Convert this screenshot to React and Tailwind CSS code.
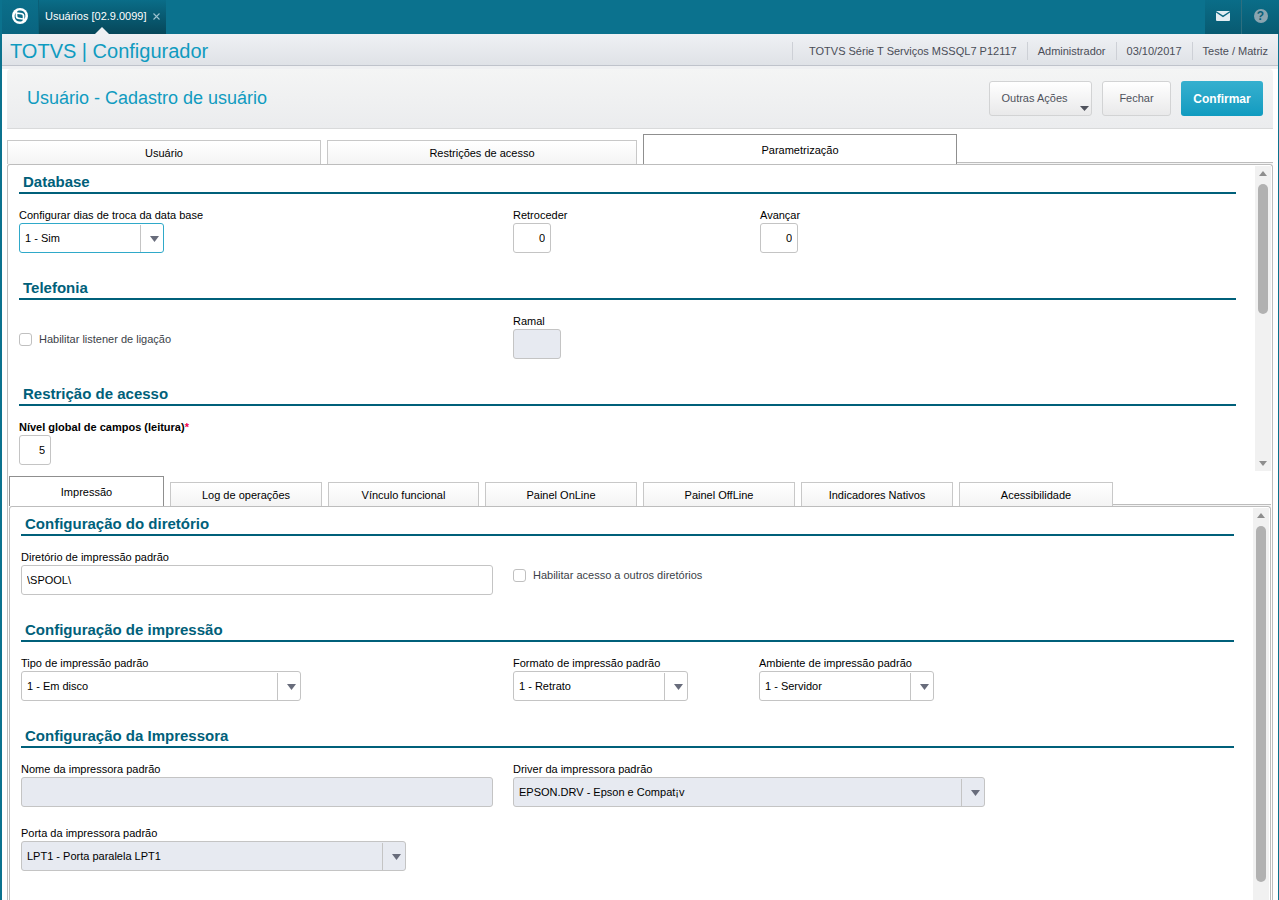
import { useState } from "react";

function Arrow({ up, className }) {
  return (
    <svg viewBox="0 0 9 6" preserveAspectRatio="none" className={className} aria-hidden="true">
      <path d={up ? "M0 6h9L4.5 0z" : "M0 0h9L4.5 6z"} fill="currentColor" />
    </svg>
  );
}

function TopBar() {
  return (
    <header className="flex h-[34px] justify-between bg-[#0b728e] pl-0.5">
      <div className="flex">
        <button type="button" aria-label="Início" className="flex w-[37px] items-center justify-center border-r border-[#0a5f77] bg-linear-to-b from-[#0b6f8a] to-[#096480]">
          <svg viewBox="0 0 16 16" className="mb-0.5 size-4" aria-hidden="true">
            <circle cx="8" cy="8" r="8" fill="#fff" />
            <path d="M6.800 2.600Q12.200 1.900 13.300 6.600Q13.700 9.200 12.400 11.200V7.600Q12.400 5.400 10.200 4.900L4.800 4.200Q5.600 2.900 6.800 2.600z" fill="#0b6a85" />
            <path d="M9.200 13.400Q3.800 14.100 2.700 9.400Q2.300 6.800 3.600 4.800V8.400Q3.600 10.600 5.800 11.100L11.200 11.800Q10.400 13.100 9.200 13.400z" fill="#0b6a85" />
            <path d="M5.400 5.900L9.400 6.500Q10.700 6.800 10.700 8V10.200L6.700 9.600Q5.400 9.300 5.400 8z" fill="#0b6a85" />
          </svg>
        </button>
        <div className="relative flex w-[127px] items-center bg-linear-to-b from-[#0a6d88] to-[#06475a] pl-1.5 text-[11px] text-white">
          <span className="whitespace-nowrap pb-0.5">Usuários [02.9.0099]</span>
          <button type="button" aria-label="Fechar aba" className="ml-1.5 pb-0.5">
            <svg viewBox="0 0 7 7" className="size-[7px]" aria-hidden="true">
              <path d="M.5.5l6 6M6.500.5l-6 6" stroke="#9cc3cf" strokeWidth="1.100" />
            </svg>
          </button>
          <svg viewBox="0 0 14 7" className="absolute bottom-0 left-14 h-[7px] w-3.5" aria-hidden="true">
            <path d="M0 7L7 0l7 7z" fill="#eef0f3" />
          </svg>
        </div>
      </div>
      <div className="flex">
        <button type="button" aria-label="Mensagens" className="flex w-[37px] items-center justify-center border-r border-[#2d6f80] bg-linear-to-b from-[#0a6d88] to-[#085a71]">
          <svg viewBox="0 0 14 10" className="mb-0.5 h-2.5 w-3.5" aria-hidden="true">
            <rect width="14" height="10" rx="1" fill="#e3edf2" />
            <path d="M0 .8l7 4.600 7-4.600" fill="none" stroke="#0a6680" strokeWidth="1.300" />
          </svg>
        </button>
        <button type="button" aria-label="Ajuda" className="flex w-[37px] items-center justify-center bg-linear-to-b from-[#0a6d88] to-[#085a71]">
          <span className="mb-0.5 flex size-3.5 items-center justify-center rounded-full bg-[#8aa5b1] text-[12px] font-bold text-[#0a5f77]">?</span>
        </button>
      </div>
    </header>
  );
}

function AppHeader() {
  const info = ["TOTVS Série T Serviços MSSQL7 P12117", "Administrador", "03/10/2017", "Teste / Matriz"];
  return (
    <div className="bg-[#eff0f2] pb-[3px]">
      <div className="flex h-8 items-center justify-between border-b border-[#bfc3cb] bg-linear-to-b from-[#eff1f4] to-[#dfe2e7] pl-2 pt-0.5">
        <p className="whitespace-nowrap text-[20px] text-[#0f9bc0]">TOTVS | Configurador</p>
        <ul className="flex text-[11px] text-[#4a4d57]">
          {info.map((text) => (
            <li key={text} className="flex h-[18px] items-center whitespace-nowrap border-l border-[#cdd0d6] px-[10px] pt-px first:pl-4">
              {text}
            </li>
          ))}
        </ul>
      </div>
    </div>
  );
}

function TitleBar() {
  return (
    <div className="mx-[5px] flex h-[60px] items-center justify-between rounded-t border-b border-[#d9dadb] bg-linear-to-b from-[#f4f5f5] to-[#ebecee] pl-5 pr-[10px]">
      <h1 className="text-[18px] text-[#0f9bc0]">Usuário - Cadastro de usuário</h1>
      <div className="flex gap-[10px] text-[11px] text-[#4f525c]">
        <button type="button" className="relative h-[35px] w-[103px] rounded-[3px] border border-[#d2d3d4] bg-linear-to-b from-white to-[#e9e9ea] pr-3">
          Outras Ações
          <Arrow className="absolute bottom-1 right-[2px] h-[5px] w-[9px] text-[#4f525c]" />
        </button>
        <button type="button" className="h-[35px] w-[69px] rounded-[3px] border border-[#d2d3d4] bg-linear-to-b from-white to-[#e9e9ea]">
          Fechar
        </button>
        <button type="button" className="h-[35px] w-[82px] rounded-[3px] bg-linear-to-b from-[#35b0cf] to-[#0f9bc0] text-[12px] font-bold text-white">
          Confirmar
        </button>
      </div>
    </div>
  );
}

function Tabs({ items, active, onSelect }) {
  return (
    <div role="tablist" className="flex items-end">
      {items.map(({ name, width }, i) => (
        <div key={name} className={i < items.length - 1 ? "flex pr-1.5" : "flex"}>
          <button
            type="button"
            role="tab"
            aria-selected={i === active}
            onClick={() => onSelect(i)}
            className={
              (i === active
                ? "h-[30px] border-[#8f8f8f] bg-white "
                : "h-6 border-[#c8c8c8] bg-linear-to-b from-white to-[#f4f4f4] ") +
              "border border-b-0 pt-0.5 text-[11px] " + width
            }
          >
            {name}
          </button>
        </div>
      ))}
      <div className="h-[2px] flex-1 border-t border-[#bdbdbd] bg-[#f4f4f4]" />
    </div>
  );
}

function ScrollTrack({ thumb, end }) {
  return (
    <div className="flex w-4 shrink-0 flex-col items-center bg-[#f1f1f1] py-[5px]">
      <Arrow up className="mb-2 h-[5px] w-2 text-[#8e8e8e]" />
      <div className={"w-[10px] rounded-full bg-[#b1b1b1] " + thumb} />
      {end && <Arrow className="mt-auto h-[5px] w-2 text-[#8e8e8e]" />}
    </div>
  );
}

function Section({ title, last, children }) {
  return (
    <section className={last ? "pb-1.5" : "pb-[23px]"}>
      <h2 className="mb-[15px] h-6 border-b-2 border-[#00607a] pl-1 text-[15px] leading-6 font-bold text-[#00607a]">{title}</h2>
      {children}
    </section>
  );
}

function Field({ id, label, required, className = "", children }) {
  return (
    <div className={"min-w-0 " + className}>
      <label htmlFor={id} className={"block h-3.5 whitespace-nowrap text-[11px] leading-[13px] " + (required ? "font-bold" : "")}>
        {label}
        {required && <span className="text-[#f0004c]">*</span>}
      </label>
      {children}
    </div>
  );
}

function TextBox({ id, value, width, numeric, disabled }) {
  return (
    <input
      id={id}
      type="text"
      defaultValue={value}
      disabled={disabled}
      className={
        "block h-[30px] rounded-[3px] border border-[#c4c4c4] px-[5px] text-[11px] text-black " +
        (numeric ? "text-right " : "") +
        (disabled ? "bg-[#e7eaf1] " : "bg-white ") +
        width
      }
    />
  );
}

function Select({ id, value, width, focused, disabled }) {
  return (
    <div className={"relative h-[30px] max-w-full " + width}>
      <select
        id={id}
        disabled={disabled}
        className={
          "block size-full appearance-none rounded-[3px] border pl-[5px] pr-6 text-[11px] text-black opacity-100 " +
          (focused ? "border-[#2fa9c9] " : "border-[#c4c4c4] ") +
          (disabled ? "bg-[#e7eaf1]" : "bg-white")
        }
      >
        <option>{value}</option>
      </select>
      <span className="pointer-events-none absolute bottom-px right-px top-0.5 flex w-[23px] items-center justify-center border-l border-[#c4c4c4] pl-1">
        <Arrow className="h-1.5 w-[9px] text-[#686c7b]" />
      </span>
    </div>
  );
}

function CheckBox({ label, className }) {
  return (
    <label className={"flex items-center gap-[7px] self-start whitespace-nowrap text-[11px] leading-[13px] text-[#3c3f48] " + className}>
      <input type="checkbox" className="size-[13px] appearance-none rounded-[3px] border border-[#c0c0c0] bg-white checked:bg-[#0f9bc0]" />
      {label}
    </label>
  );
}

const mainTabs = [
  { name: "Usuário", width: "w-[314px]" },
  { name: "Restrições de acesso", width: "w-[310px]" },
  { name: "Parametrização", width: "w-[314px]" },
];

const subTabs = [
  { name: "Impressão", width: "w-[155px]" },
  { name: "Log de operações", width: "w-[152px]" },
  { name: "Vínculo funcional", width: "w-[151px]" },
  { name: "Painel OnLine", width: "w-[152px]" },
  { name: "Painel OffLine", width: "w-[152px]" },
  { name: "Indicadores Nativos", width: "w-[152px]" },
  { name: "Acessibilidade", width: "w-[154px]" },
];

function GeneralSettings() {
  const row = "grid grid-cols-[494fr_247fr_476fr]";
  return (
    <div className="flex pr-px pt-px">
      <div className="mr-[19px] min-w-0 flex-1 pl-[11px] pt-1">
        <Section title="Database">
          <div className={row}>
            <Field id="troca" label="Configurar dias de troca da data base">
              <Select id="troca" value="1 - Sim" width="w-[145px]" focused />
            </Field>
            <Field id="retroceder" label="Retroceder">
              <TextBox id="retroceder" value="0" width="w-[38px]" numeric />
            </Field>
            <Field id="avancar" label="Avançar">
              <TextBox id="avancar" value="0" width="w-[38px]" numeric />
            </Field>
          </div>
        </Section>
        <Section title="Telefonia">
          <div className={row}>
            <CheckBox label="Habilitar listener de ligação" className="pt-[18px]" />
            <Field id="ramal" label="Ramal">
              <TextBox id="ramal" value="" width="w-12" disabled />
            </Field>
          </div>
        </Section>
        <Section title="Restrição de acesso" last>
          <Field id="nivel" label="Nível global de campos (leitura)" required>
            <TextBox id="nivel" value="5" width="w-8" numeric />
          </Field>
        </Section>
      </div>
      <ScrollTrack thumb="h-[130px]" end />
    </div>
  );
}

function PrintSettings() {
  const row = "grid grid-cols-[492fr_246fr_475fr]";
  return (
    <div className="flex flex-1 rounded-t-[3px] border border-b-0 border-[#bdbdbd] pr-px pt-px">
      <div className="mr-[19px] min-w-0 flex-1 pl-[11px] pt-1">
        <Section title="Configuração do diretório">
          <div className={row}>
            <Field id="diretorio" label="Diretório de impressão padrão" className="pr-5">
              <TextBox id="diretorio" value="\SPOOL\" width="w-full" />
            </Field>
            <CheckBox label="Habilitar acesso a outros diretórios" className="pt-[18px]" />
          </div>
        </Section>
        <Section title="Configuração de impressão">
          <div className={row}>
            <Field id="tipo" label="Tipo de impressão padrão">
              <Select id="tipo" value="1 - Em disco" width="w-[280px]" />
            </Field>
            <Field id="formato" label="Formato de impressão padrão">
              <Select id="formato" value="1 - Retrato" width="w-[175px]" />
            </Field>
            <Field id="ambiente" label="Ambiente de impressão padrão">
              <Select id="ambiente" value="1 - Servidor" width="w-[175px]" />
            </Field>
          </div>
        </Section>
        <Section title="Configuração da Impressora">
          <div className={row + " gap-y-5"}>
            <Field id="nome" label="Nome da impressora padrão" className="pr-5">
              <TextBox id="nome" value="" width="w-full" disabled />
            </Field>
            <Field id="driver" label="Driver da impressora padrão" className="col-span-2">
              <Select id="driver" value="EPSON.DRV - Epson e Compat¡v" width="w-[472px]" disabled />
            </Field>
            <Field id="porta" label="Porta da impressora padrão">
              <Select id="porta" value="LPT1 - Porta paralela LPT1" width="w-[385px]" disabled />
            </Field>
          </div>
        </Section>
      </div>
      <ScrollTrack thumb="h-[356px]" />
    </div>
  );
}

export default function App() {
  const [tab, setTab] = useState(2);
  const [subTab, setSubTab] = useState(0);
  return (
    <div className="flex min-h-screen flex-col bg-white font-['Liberation_Sans',Arial,sans-serif] leading-normal text-black">
      <TopBar />
      <div className="flex flex-1 flex-col border-l-2 border-r border-[#0b728e]">
        <AppHeader />
        <TitleBar />
        <main className="flex flex-1 flex-col px-[5px] pt-[5px]">
          <Tabs items={mainTabs} active={tab} onSelect={setTab} />
          <div className="flex flex-1 flex-col rounded-t-[3px] border border-b-0 border-[#bdbdbd]">
            <GeneralSettings />
            <div className="flex flex-1 flex-col px-px pt-[5px]">
              <Tabs items={subTabs} active={subTab} onSelect={setSubTab} />
              <PrintSettings />
            </div>
          </div>
        </main>
      </div>
    </div>
  );
}
